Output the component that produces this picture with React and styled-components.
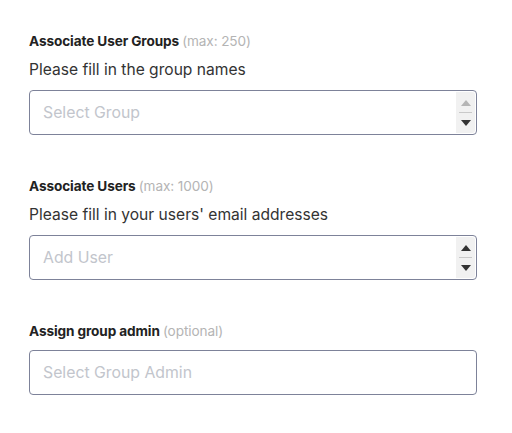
import React from "react";
import styled, { createGlobalStyle } from "styled-components";

const Global = createGlobalStyle`
  html, body { margin: 0; padding: 0; background: #fff; }
  body { font-family: Inter, "Noto Sans", sans-serif; }
`;

const Page = styled.div`
  width: 512px;
  padding: 31px 0 0 29px;
  box-sizing: border-box;
  display: flex;
  flex-direction: column;
  gap: 41px;
`;

const Section = styled.div`
  display: flex;
  flex-direction: column;
  width: 448px;
`;

const Label = styled.div`
  font-size: 13.6px;
  line-height: 20px;
  font-weight: 700;
  color: #222;
  letter-spacing: -0.1px;
`;

const Hint = styled.span`
  font-weight: 400;
  color: #b4b4b4;
`;

const Description = styled.div`
  margin-top: 8px;
  font-size: 15.6px;
  line-height: 22px;
  color: #333;
`;

const Box = styled.div`
  margin-top: 9px;
  height: 45px;
  box-sizing: border-box;
  border: 1px solid #7d8299;
  border-radius: 4px;
  display: flex;
  align-items: stretch;
  padding: 1px;
`;

const Placeholder = styled.div`
  flex: 1;
  display: flex;
  align-items: center;
  padding-left: 12px;
  font-size: 15.8px;
  color: #c2c5cc;
`;

const Spinner = styled.div`
  width: 19px;
  background: #f1f1f1;
  display: flex;
  flex-direction: column;
  align-items: center;
  justify-content: center;
  border-radius: 0 3px 3px 0;
`;

const Arrow = styled.div`
  height: 19px;
  width: 100%;
  display: flex;
  align-items: center;
  justify-content: center;
`;

const Sep = styled.div`
  width: 13px;
  height: 1px;
  background: #c9c9c9;
`;

const Up = ({ color }) => (
  <svg width="10" height="6" viewBox="0 0 10 6">
    <polygon points="0,6 10,6 5,0" fill={color} />
  </svg>
);
const Down = ({ color }) => (
  <svg width="10" height="6" viewBox="0 0 10 6">
    <polygon points="0,0 10,0 5,6" fill={color} />
  </svg>
);

const Stepper = ({ upDisabled }) => (
  <Spinner>
    <Arrow>
      <Up color={upDisabled ? "#b5b5b5" : "#333"} />
    </Arrow>
    <Sep />
    <Arrow>
      <Down color="#333" />
    </Arrow>
  </Spinner>
);

export default function App() {
  return (
    <>
      <Global />
      <Page>
        <Section>
          <Label>
            Associate User Groups <Hint>(max: 250)</Hint>
          </Label>
          <Description>Please fill in the group names</Description>
          <Box>
            <Placeholder>Select Group</Placeholder>
            <Stepper upDisabled />
          </Box>
        </Section>
        <Section>
          <Label>
            Associate Users <Hint>(max: 1000)</Hint>
          </Label>
          <Description>Please fill in your users' email addresses</Description>
          <Box>
            <Placeholder>Add User</Placeholder>
            <Stepper />
          </Box>
        </Section>
        <Section>
          <Label>
            Assign group admin <Hint>(optional)</Hint>
          </Label>
          <Box>
            <Placeholder>Select Group Admin</Placeholder>
          </Box>
        </Section>
      </Page>
    </>
  );
}
